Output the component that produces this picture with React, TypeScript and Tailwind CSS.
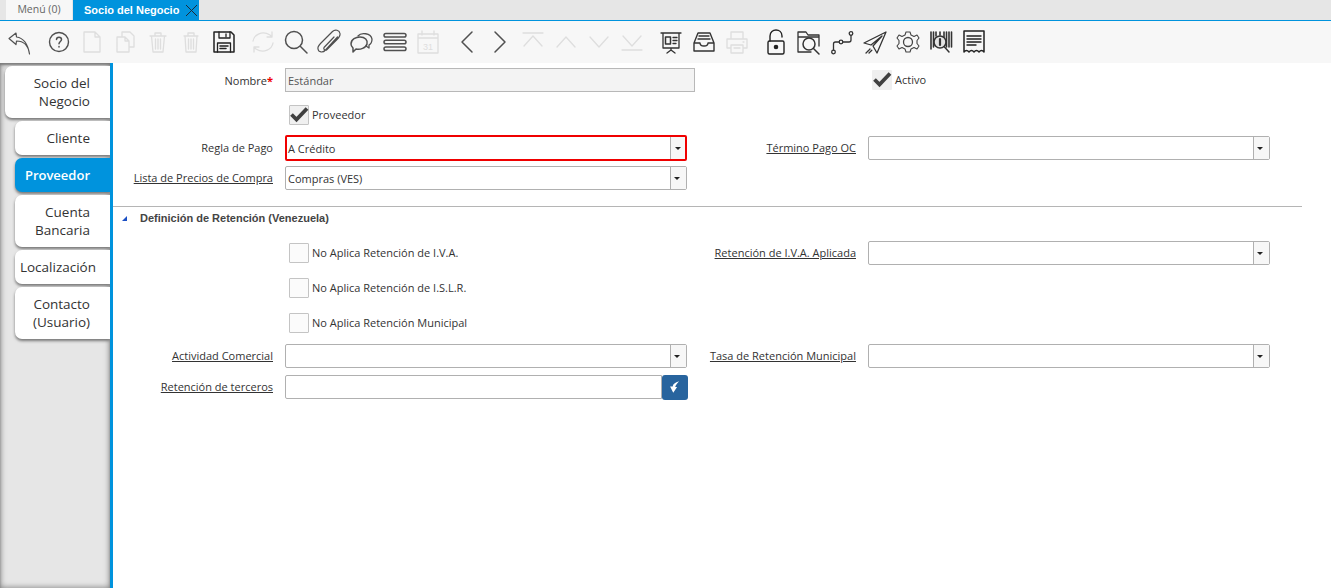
import type { ReactNode } from "react";

const FONT = "font-['Open_Sans','Noto_Sans',sans-serif]";

// toolbar icon, drawn on a 30x30 box
function Ico({ children, off }: { children: ReactNode; off?: boolean }) {
  return (
    <div className="flex h-[30px] w-[33px] shrink-0 items-center justify-center">
      <svg
        width="30"
        height="30"
        viewBox="0 0 30 30"
        fill="none"
        stroke={off ? "#dedede" : "#505050"}
        strokeWidth="1.3"
        strokeLinecap="round"
        strokeLinejoin="round"
      >
        {children}
      </svg>
    </div>
  );
}

function Toolbar() {
  return (
    <div className="flex h-[42px] items-center gap-0 bg-[#f7f7f7] pl-[3px]">
      {/* back */}
      <Ico>
        <path d="M11 6 L4 11.5 L11 17.5 L11.5 14 C17 14 23 17 24.5 27 C23 18 19 11 11.5 10 Z" strokeWidth="1.2" />
      </Ico>
      <div className="w-[6px]" />
      <Ico>
        <circle cx="15" cy="15" r="9.5" strokeWidth="1.4" />
        <path d="M12.5 12.5 C12.5 9.5 17.5 9.5 17.5 12.5 C17.5 14.5 15 14.5 15 16.8 M15 19.5 L15 19.9" strokeWidth="1.5" />
      </Ico>
      <Ico off>
        <path d="M7 5 H18 L23 10 V25 H7 Z M18 5 V10 H23" />
      </Ico>
      <Ico off>
        <path d="M7 10 H15 L19 14 V25 H7 Z M12 10 V5 H20 L24 9 V20 H19 M15 10 V14 H19" />
      </Ico>
      <Ico off>
        <path d="M7 9 H23 M12 9 V6 H18 V9 M8.5 9 L10 25 H20 L21.5 9 M12.5 12 V22 M15 12 V22 M17.5 12 V22" />
      </Ico>
      <Ico off>
        <path d="M8 9 H22 M12 9 V6 H18 V9 M9 9 L10 25 H20 L21 9 M12.5 12 V22 M15 12 V22 M17.5 12 V22" />
      </Ico>
      <Ico>
        <g stroke="#222">
          <path d="M5 5 H22 L25 8 V25 H5 Z" strokeWidth="1.5" />
          <path d="M10 5 V11 H21 V5 M17 7 V9.5" />
          <path d="M8.5 25 V16 H21.5 V25" />
          <path d="M11 19 H19 M11 21.5 H17" strokeWidth="1.5" />
        </g>
      </Ico>
      <div className="w-[6px]" />
      <Ico off>
        <path d="M5 14 C6 8 14 3 22 8 L24 10 M25 16 C24 22 16 27 8 22 L6 20 M24 5 V10 H19 M6 25 V20 H11" />
      </Ico>
      <Ico>
        <circle cx="13" cy="13" r="8.5" strokeWidth="1.5" />
        <path d="M19.5 19.5 L26 26" strokeWidth="1.5" />
      </Ico>
      <Ico>
        <path d="M23.5 10 L11.5 23 C9 26 4.5 25.5 4 22 C3.5 20 5 18 6.5 16.5 L18.5 4.5 C21 2 25.5 3 26 6.5 C26.5 9 24.5 11 23 12.5 L13 22.5 C11.5 24 9 22.5 10 20.5 L20 10" strokeWidth="1.2" />
      </Ico>
      <Ico>
        <path d="M11 9 C14 5 24 6 25 12 C25 15 24 17 22 18 V21 L19 19" />
        <path d="M4 17 C4 12 9 10 13 10 C18 10 21 13 20 17 C19 21 13 23 9 22 L6 25 V21 C5 20 4 19 4 17 Z" strokeWidth="1.5" />
      </Ico>
      <Ico>
        <g strokeWidth="1.5">
          <rect x="4" y="6.5" width="22" height="3.6" rx="1.8" />
          <rect x="4" y="13.2" width="22" height="3.6" rx="1.8" />
          <rect x="4" y="19.9" width="22" height="3.6" rx="1.8" />
        </g>
      </Ico>
      <Ico off>
        <path d="M5 7 H25 V26 H5 Z M5 11 H25 M9 4 V8 M21 4 V8" />
        <text x="15" y="23" fontSize="9" textAnchor="middle" fill="#dedede" stroke="none" fontFamily="Liberation Sans, sans-serif">31</text>
      </Ico>
      <div className="w-[6px]" />
      <Ico>
        <path d="M20 5 L10 15 L20 25" strokeWidth="1.5" />
      </Ico>
      <Ico>
        <path d="M10 5 L20 15 L10 25" strokeWidth="1.5" />
      </Ico>
      <Ico off>
        <path d="M5 6 H25 M6 19 L15 9 L24 19" />
      </Ico>
      <Ico off>
        <path d="M6 20 L15 10 L24 20" />
      </Ico>
      <Ico off>
        <path d="M6 10 L15 20 L24 10" />
      </Ico>
      <Ico off>
        <path d="M6 9 L15 19 L24 9 M5 23 H25" />
      </Ico>
      <div className="w-[6px]" />
      <Ico>
        <g stroke="#333">
          <path d="M5 6 H25 M7 6 V21 H23 V6 M15 21 V23 M11 26 L15 23 L19 26" />
          <rect x="9.5" y="10" width="5" height="7" strokeWidth="1.5" />
          <path d="M17 10.5 H21 M17 13.5 H21 M17 16.5 H20" />
        </g>
      </Ico>
      <Ico>
        <g stroke="#333">
          <path d="M5 16 L9 6 H21 L25 16 V24 H5 Z M5 16 H11 C11 20 19 20 19 16 H25" strokeWidth="1.4" />
          <path d="M10 9 H20 M9 12 H21" />
        </g>
      </Ico>
      <Ico off>
        <path d="M9 12 V5 H21 V12 M5 12 H25 V21 H21 M9 21 H5 V12 M9 18 H21 V26 H9 Z M12 21 H18 M21 15 H22" />
      </Ico>
      <div className="w-[6px]" />
      <Ico>
        <g stroke="#222" strokeWidth="1.4">
          <path d="M9 14 V9 C9 1 21 1 21 9 V10" />
          <rect x="7" y="14" width="16" height="13" rx="1.5" />
          <circle cx="15" cy="20" r="1.6" fill="#222" />
        </g>
      </Ico>
      <Ico>
        <g stroke="#333">
          <path d="M17 25 H4 V5 H12 L14 8 H25 V19 M4 10 H25" strokeWidth="1.3" />
          <circle cx="15" cy="17" r="6" strokeWidth="1.5" />
          <path d="M19.5 21.5 L25 27" strokeWidth="1.5" />
        </g>
      </Ico>
      <Ico>
        <g stroke="#333">
          <circle cx="6.5" cy="25" r="1.8" />
          <circle cx="14" cy="15" r="1.8" />
          <circle cx="24" cy="6.5" r="1.8" />
          <path d="M6.5 23 V17 Q6.5 15 8.5 15 H12 M16 15 H22 Q24 15 24 13 V8.5" />
        </g>
      </Ico>
      <Ico>
        <g stroke="#333">
          <path d="M26 5 L4 16 L11 18 L22 9 L13 19 L17 26 Z" />
          <path d="M6 26 L10 22 M9 26 L12 23" strokeDasharray="1.5 1" />
        </g>
      </Ico>
      <Ico>
        <g stroke="#444">
          <path d="M13 5 H17 L18 8 L21 9.5 L24 8 L26 11 L24 13.5 V16.5 L26 19 L24 22 L21 20.5 L18 22 L17 25 H13 L12 22 L9 20.5 L6 22 L4 19 L6 16.5 V13.5 L4 11 L6 8 L9 9.5 L12 8 Z" strokeWidth="1.1" />
          <circle cx="15" cy="15" r="4.5" />
        </g>
      </Ico>
      <Ico>
        <g stroke="#333">
          <path d="M5 5 V22 M7.5 5 V20 M10 5 V9 M14 5 V8 M18 5 V10 M20.5 5 V20 M23 5 V20 M25.5 5 V20" strokeWidth="1.6" />
          <circle cx="14" cy="15" r="6" fill="#e4e4e4" strokeWidth="1.6" />
          <path d="M14 12 V18" strokeWidth="2.2" />
          <path d="M18.5 20 L23 25" strokeWidth="1.5" />
        </g>
      </Ico>
      <Ico>
        <g stroke="#222">
          <path d="M5 25 V4 H25 V25 Q22.5 22 20 25 Q17.5 22 15 25 Q12.5 22 10 25 Q7.5 22 5 25 Z" strokeWidth="1.5" />
          <path d="M8 9 H22 M8 12 H22 M8 15 H22 M8 18 H17" strokeWidth="1.4" />
        </g>
      </Ico>
    </div>
  );
}

function SideTab({ children, active, top, h }: { children: ReactNode; active?: boolean; top?: boolean; h: string }) {
  const base = "flex items-center justify-end rounded-l-[7px] text-right shadow-[0_2px_3px_#777] ";
  const look = active ? "bg-[#0093dd] font-semibold text-white " : "bg-white text-[#333] ";
  const box = top ? "ml-[5px] " : "ml-[15px] ";
  return <div className={base + look + box + h}>{children}</div>;
}

function Sidebar() {
  return (
    <div className="flex w-[110px] shrink-0 flex-col gap-[3px] bg-[#e6e6e6] pt-[3px] shadow-[inset_0_0_6px_#777,inset_0_2px_2px_#888]">
      <SideTab top h="h-[52px] pr-[20px] text-[13.5px] leading-[18px]">
        <span>
          Socio del
          <br />
          Negocio
        </span>
      </SideTab>
      <SideTab h="h-[34px] pr-[20px] text-[13.5px]">Cliente</SideTab>
      <SideTab active h="h-[34px] pr-[20px] pt-[1px] text-[13px]">
        Proveedor
      </SideTab>
      <SideTab h="h-[52px] pr-[20px] text-[13.5px] leading-[18px]">
        <span>
          Cuenta
          <br />
          Bancaria
        </span>
      </SideTab>
      <SideTab h="h-[34px] pr-[14px] text-[13.5px]">Localización</SideTab>
      <SideTab h="h-[52px] pr-[20px] text-[13.5px] leading-[18px]">
        <span>
          Contacto
          <br />
          (Usuario)
        </span>
      </SideTab>
    </div>
  );
}

function Label({ children, link }: { children: ReactNode; link?: boolean }) {
  return (
    <div className="w-[160px] shrink-0 whitespace-nowrap text-right text-[11px] text-[#333]">
      <span className={link ? "underline" : ""}>{children}</span>
    </div>
  );
}

function Select({ value, alert }: { value?: string; alert?: boolean }) {
  return (
    <div
      className={
        "flex items-stretch rounded-[2px] bg-white " +
        (alert ? "h-[26px] w-[402px] border-2 border-[#f00000]" : "h-[24px] w-[402px] border border-[#b0b0b0]")
      }
    >
      <div className={"flex-1 pt-[1px] text-[11px] leading-[22px] text-[#333] " + (alert ? "pl-[1px]" : "pl-[2px]")}>
        {value}
      </div>
      <div
        className={
          "flex items-center justify-center border-l border-[#b0b0b0] bg-[#f7f7f7] " +
          (alert ? "w-[15px] pr-[1px]" : "w-[16px] pr-[3px]")
        }
      >
        <span className="h-0 w-0 border-x-[3.5px] border-t-[3.5px] border-x-transparent border-t-[#222]" />
      </div>
    </div>
  );
}

function Check({ label, on, flat }: { label: string; on?: boolean; flat?: boolean }) {
  return (
    <div className="flex items-center gap-[3px]">
      <div
        className={
          "flex h-[20px] w-[20px] items-center justify-center rounded-[1px] " +
          (flat ? "bg-[#efefef]" : on ? "border border-[#c4c4c4] bg-[#f0f0f0]" : "border border-[#c4c4c4] bg-[#fbfbfb]")
        }
      >
        {on && (
          <svg className="shrink-0" width="20" height="18" viewBox="0 0 20 18" fill="none" stroke="#404040" strokeWidth="3.8">
            <path d="M2.5 8.5 L7.5 13.5 L18 2.5" />
          </svg>
        )}
      </div>
      <span className="text-[11px] text-[#333]">{label}</span>
    </div>
  );
}

function Form() {
  return (
    <div className="flex-1 bg-white pt-[5px]">
      <div className="flex h-[24px] items-center">
        <Label>
          <span className="relative top-[1px]">
            Nombre<span className="font-bold text-[#f00000]">*</span>
          </span>
        </Label>
        <div className="ml-[12px] h-[24px] w-[410px] border border-[#b8b8b8] bg-[#f3f3f3] pl-[2px] pt-[1px] text-[11px] leading-[22px] text-[#555]">
          Estándar
        </div>
        <div className="ml-[177px]">
          <Check label="Activo" on flat />
        </div>
      </div>
      <div className="mt-[11px] flex h-[24px] items-center pl-[176px]">
        <Check label="Proveedor" on />
      </div>
      <div className="mt-[8px] flex h-[26px] items-center">
        <Label>Regla de Pago</Label>
        <div className="ml-[12px]">
          <Select value="A Crédito" alert />
        </div>
        <div className="w-[169px] text-right text-[11px] text-[#333] underline">Término Pago OC</div>
        <div className="ml-[12px]">
          <Select />
        </div>
      </div>
      <div className="mt-[5px] flex h-[24px] items-center">
        <Label link>Lista de Precios de Compra</Label>
        <div className="ml-[12px]">
          <Select value="Compras (VES)" />
        </div>
      </div>

      <div className="mr-[29px] mt-[16px] border-t border-[#b5b5b5]" />
      <div className="mt-[1px] flex h-[20px] items-center pl-[9px]">
        <span className="h-0 w-0 border-b-[5px] border-l-[5px] border-b-[#1b4fc4] border-l-transparent" />
        <span className="ml-[13px] font-['Liberation_Sans',sans-serif] text-[11px] font-bold text-[#444]">
          Definición de Retención (Venezuela)
        </span>
      </div>

      <div className="mt-[15px] flex h-[20px] items-center">
        <div className="w-[176px]" />
        <div className="w-[398px]">
          <Check label="No Aplica Retención de I.V.A." />
        </div>
        <div className="w-[169px] whitespace-nowrap pt-[1px] text-right text-[11px] text-[#333] underline">
          Retención de I.V.A. Aplicada
        </div>
        <div className="ml-[12px]">
          <Select />
        </div>
      </div>
      <div className="mt-[15px] flex h-[20px] items-center pl-[176px]">
        <Check label="No Aplica Retención de I.S.L.R." />
      </div>
      <div className="mt-[15px] flex h-[20px] items-center pl-[176px]">
        <Check label="No Aplica Retención Municipal" />
      </div>

      <div className="mt-[11px] flex h-[24px] items-center">
        <Label link>Actividad Comercial</Label>
        <div className="ml-[12px]">
          <Select />
        </div>
        <div className="w-[169px] whitespace-nowrap text-right text-[11px] text-[#333] underline">
          Tasa de Retención Municipal
        </div>
        <div className="ml-[12px]">
          <Select />
        </div>
      </div>
      <div className="mt-[7px] flex h-[24px] items-center">
        <Label link>Retención de terceros</Label>
        <div className="ml-[12px] h-[24px] w-[377px] rounded-l-[2px] border border-[#b0b0b0] bg-white" />
        <div className="flex h-[25px] w-[26px] items-center justify-center rounded-[3px] bg-[#28649e]">
          <svg width="14" height="14" viewBox="0 0 12 12" fill="#fff">
            <path d="M9.5 1 C6 2 4.2 3.5 4 5.5 L1.8 5.5 L4.5 11 L7.8 6 L6.2 6 C6.5 4.5 7.5 3 9.5 1 Z" />
          </svg>
        </div>
      </div>
    </div>
  );
}

export default function App() {
  return (
    <div className={"flex h-[588px] w-[1331px] flex-col overflow-hidden bg-white " + FONT}>
      <div className="flex h-[20px] items-end bg-[#e6e6e6] pl-[6px]">
        <div className="flex h-[20px] w-[66px] items-center justify-center bg-[#f7f7f7] text-[10.5px] text-[#666]">
          Menú (0)
        </div>
        <div className="ml-[1px] flex h-[20px] w-[126px] items-center bg-[#0093dd] pl-[11px] font-['Liberation_Sans',sans-serif] text-[11px] font-bold text-white">
          Socio del Negocio
          <svg className="ml-[6px]" width="13" height="13" viewBox="0 0 13 13" stroke="#1b2a38" strokeWidth="1">
            <path d="M1 1 L12 12 M12 1 L1 12" />
          </svg>
        </div>
      </div>
      <div className="h-[1px] bg-[#0093dd]" />
      <Toolbar />
      <div className="flex flex-1">
        <Sidebar />
        <div className="w-[3px] bg-[#0093dd]" />
        <Form />
      </div>
    </div>
  );
}
